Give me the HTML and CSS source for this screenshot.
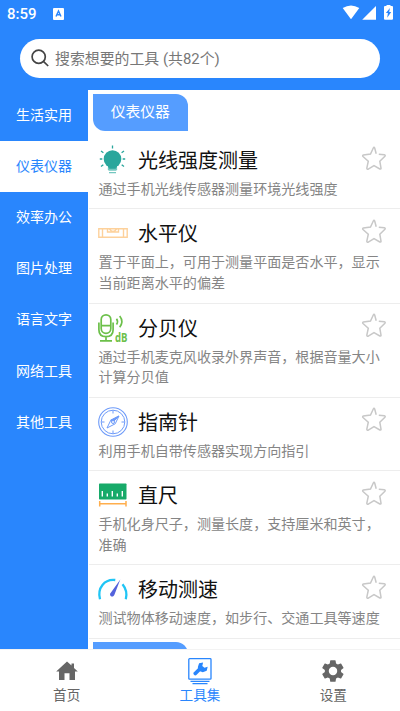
FILE: index.html
```html
<!DOCTYPE html>
<html lang="zh-CN">
<head>
<meta charset="utf-8">
<meta name="viewport" content="width=device-width, initial-scale=1">
<title>工具集</title>
<link rel="stylesheet" href="styles.css">
</head>
<body>
<svg class="defs" width="0" height="0"><symbol id="star" viewBox="0 0 26 26"><path d="M15.2 8.8 13.7 3Q13 1.5 12.3 3L9.5 9.1 2.4 10Q1.1 10.5 2 11.5L7.3 16.2 5.8 23.2Q6 24.7 7.3 24.2L13 20.6 18.8 24Q20.2 24.4 20 23L18.8 16.2 23.9 11.3Q24.7 10.1 23.4 9.8L17.8 9.2"/></symbol></svg>
<header class="header">
  <div class="status">
    <span class="clock">8:59</span>
    <svg class="status-app" width="11" height="12" viewBox="0 0 11 12"><rect width="11" height="12" rx="1" fill="#fff"/><path d="M3 8.5 5.5 3 8 8.5M4 6.7h3" fill="none" stroke="#2986fd" stroke-width="1.4"/></svg>
    <svg class="status-icons" width="51" height="17" viewBox="0 0 51 17" fill="#fff"><path d="M.7 4Q9-1.2 17.3 4L9 15.2zM34 2v13.8H20.2zM42 3q0-1 1-1h1.500V1h4v1H50q1 0 1 1v11.800q0 1-1 1h-7q-1 0-1-1z"/><path d="m47.900 4-4 5h2l-.7 4.700 4-5.600h-2z" fill="#2986fd"/></svg>
  </div>
  <div class="search">
    <svg width="18" height="18" viewBox="0 0 18 18" fill="none" stroke="#444" stroke-width="1.7"><circle cx="7.7" cy="7.7" r="6.6"/><path d="m12.4 12.4 4.8 4.6"/></svg>
    <span>搜索想要的工具 (共82个)</span>
  </div>
</header>
<main class="main">
  <nav class="side">
    <a>生活实用</a><a class="current">仪表仪器</a><a>效率办公</a><a>图片处理</a><a>语言文字</a><a>网络工具</a><a>其他工具</a>
  </nav>
  <div class="content">
    <h2 class="section">仪表仪器</h2>
    <article class="tool">
      <div class="tool-head">
        <svg class="icon" viewBox="0 0 30 30"><circle cx="14.5" cy="14" r="8.8" fill="#29a69c"/><path d="M10 20h9v4h-9z" fill="#29a69c"/><path d="M10.5 22.5v1.8h8v-1.8M10.5 25.2h8M11 27.6h7" fill="none" stroke="#74c7c0" stroke-width="1.3"/><path d="M14.5.5v3M3 6l2.4 1.8M26 6l-2.4 1.8M1.8 14h2.5M24.7 14h2.5M3 21.5l2.3-1.8M26 21.5l-2.3-1.8" stroke="#29a69c" stroke-width="1.3"/></svg>
        <h3>光线强度测量</h3><svg class="star"><use href="#star"/></svg>
      </div>
      <p>通过手机光线传感器测量环境光线强度</p>
    </article>
    <article class="tool">
      <div class="tool-head">
        <svg class="icon" viewBox="0 0 30 30" fill="none" stroke="#fdd19b" stroke-width="1.4"><path d="M.8 10.8h28.4v8.4H.8zM4.5 11v8M25.5 11v8M9.5 11v3h11v-3M11.5 11q3.5 5 7 0"/></svg>
        <h3>水平仪</h3><svg class="star"><use href="#star"/></svg>
      </div>
      <p>置于平面上，可用于测量平面是否水平，显示当前距离水平的偏差</p>
    </article>
    <article class="tool">
      <div class="tool-head">
        <svg class="icon" viewBox="0 0 30 30" fill="none" stroke="#6cc04a" stroke-width="1.7"><rect x="3.2" y="1.8" width="9.6" height="18.5" rx="4.8"/><path d="M3.2 12.7h9.6M.9 9.5v7.2q0 6.9 7.1 6.9t7.1-6.9V9.5M8 24v3.7M2 27.9h12M18.5 5.8q2 2.7 0 5.6M21.7 3q4.3 5.5 0 11.2"/><text class="db" x="17" y="28.6" textLength="12.500" lengthAdjust="spacingAndGlyphs">dB</text></svg>
        <h3>分贝仪</h3><svg class="star"><use href="#star"/></svg>
      </div>
      <p>通过手机麦克风收录外界声音，根据音量大小计算分贝值</p>
    </article>
    <article class="tool">
      <div class="tool-head">
        <svg class="icon" viewBox="0 0 30 30" fill="none" stroke="#6e9bf9"><circle cx="15" cy="15" r="14.3" stroke-width="1.1"/><circle cx="15" cy="15" r="11.8"/><path d="M15 3.5v3M15 23.5v3M3.5 15h3M23.5 15h3M21 9l-8.2 4.2L9 21l8.2-4.2z"/><path d="m21 9-8.2 4.2 2.1 2z" fill="#6e9bf9"/><circle cx="15" cy="15" r="1.5" fill="#fff"/></svg>
        <h3>指南针</h3><svg class="star"><use href="#star"/></svg>
      </div>
      <p>利用手机自带传感器实现方向指引</p>
    </article>
    <article class="tool">
      <div class="tool-head">
        <svg class="icon" viewBox="0 0 30 30"><rect x="1" y="3.5" width="27.5" height="16" rx=".7" fill="#17aa69"/><path d="M4.3 11v5.5M9.3 13.5v3M14.3 11v5.5M19.3 13.5v3M24.3 11v5.5" stroke="#fff" stroke-width="1.4"/><path d="M1.7 21v5.5M28 21v5.5M1.7 23.8H28" stroke="#ffae4d" stroke-width="1.5"/></svg>
        <h3>直尺</h3><svg class="star"><use href="#star"/></svg>
      </div>
      <p>手机化身尺子，测量长度，支持厘米和英寸，准确</p>
    </article>
    <article class="tool">
      <div class="tool-head">
        <svg class="icon" viewBox="0 0 30 30" fill="none" stroke="#20c5f5" stroke-width="2.3"><path d="M2 25.3C-1 14 6.5 4.7 17.3 6M24.5 10.300q5.500 6.700 3.300 15"/><path d="m22.300 5.600-9.500 13.100a2.200 2.200 0 1 0 3.500 2.400z" fill="#5362dc" stroke="none"/></svg>
        <h3>移动测速</h3><svg class="star"><use href="#star"/></svg>
      </div>
      <p>测试物体移动速度，如步行、交通工具等速度</p>
    </article>
    <div class="section"></div>
  </div>
</main>
<footer class="tabs">
  <a><svg width="26" height="26" viewBox="0 0 26 26" fill="#666"><path d="M13 3.500 2.200 13.500H5V22h5.500v-6.800h5V22H21v-8.500h2.800L20 9.900V5.500h-2.500v2.100z"/></svg><span>首页</span></a>
  <a class="current"><svg width="26" height="27" viewBox="0 0 26 27" fill="none" stroke="#2986fd" stroke-width="1.3"><rect x="1.800" y=".7" width="22.200" height="20.500" rx=".8"/><path d="M3.500 23.400h19M5.500 25.700h15"/><path d="m8.300 15.500 5-5" stroke-width="3.8" stroke-linecap="round"/><path d="m10.800 9.300 1.300-4 4-.8-.8 3.500 2.200 1.800 3.200-1-1 4-3.900 1.500-3.500-1.300z" fill="#2986fd" stroke="none"/></svg><span>工具集</span></a>
  <a><svg width="26" height="26" viewBox="0 0 24 24" fill="#666"><path d="M19.4 13a7.6 7.6 0 0 0 0-2l2.1-1.6a.5.5 0 0 0 .1-.7l-2-3.4a.5.5 0 0 0-.6-.2l-2.5 1a7.3 7.3 0 0 0-1.7-1l-.4-2.6a.5.5 0 0 0-.5-.5h-4a.5.5 0 0 0-.5.5L9 5.1a7.3 7.3 0 0 0-1.7 1l-2.5-1a.5.5 0 0 0-.6.2l-2 3.4a.5.5 0 0 0 .1.7L4.5 11a7.6 7.6 0 0 0 0 2l-2.2 1.6a.5.5 0 0 0-.1.7l2 3.4a.5.5 0 0 0 .6.2l2.5-1a7.3 7.3 0 0 0 1.7 1l.4 2.6a.5.5 0 0 0 .5.5h4a.5.5 0 0 0 .5-.5l.4-2.6a7.3 7.3 0 0 0 1.7-1l2.5 1a.5.5 0 0 0 .6-.2l2-3.4a.5.5 0 0 0-.1-.7z"/><circle cx="12" cy="12" r="3.9" fill="#fff"/></svg><span>设置</span></a>
</footer>
</body>
</html>
```
FILE: styles.css
```css
* { box-sizing: border-box; }
body {
  margin: 0;
  height: 711px;
  display: flex;
  flex-direction: column;
  overflow: hidden;
  background: #fff;
  font-family: Roboto, "Noto Sans CJK SC", sans-serif;
}
h2, h3, p { margin: 0; font-weight: 400; }
svg { display: block; flex: none; }
.defs { position: absolute; }
.header { height: 90px; flex: none; background: #2986fd; }
.status { height: 39px; display: flex; align-items: flex-start; padding: 0 7px; color: #fff; }
.clock { width: 46px; font-size: 15px; font-weight: 500; line-height: 29px; }
.status-app { margin-top: 8px; }
.status-icons { margin: 4px 0 0 auto; }
.search {
  height: 39px;
  margin: 0 20px;
  padding: 0 0 1px 11px;
  display: flex;
  align-items: center;
  gap: 6px;
  border-radius: 20px;
  background: #fff;
  color: #777;
  font-size: 14.9px;
}
.search span { padding-bottom: 2px; }
.main { flex: 1; min-height: 0; display: flex; background: #2986fd; }
.side { width: 88px; flex: none; }
.side a {
  display: flex;
  height: 51.1px;
  padding-bottom: 3px;
  align-items: center;
  justify-content: center;
  color: #fff;
  font-size: 14px;
}
.side .current { background: #fff; color: #2986fd; }
.content { flex: 1; min-width: 0; overflow: hidden; background: #fff; padding: 4px 0 0 1px; }
.section {
  width: 94.5px;
  height: 36.5px;
  margin: 0 0 5.5px 4px;
  border-radius: 0 12px 0 12px;
  background: #559dff;
  color: #fff;
  font-size: 14.8px;
  line-height: 36px;
  text-align: center;
}
.tool { padding: 8px 10px 8.5px 9.5px; border-bottom: 1px solid #ededed; }
.tool + .section { margin-top: 3.5px; }
.tool-head { height: 34px; display: flex; align-items: center; }
.icon { width: 30px; height: 30px; margin: 0 0 2px -0.5px; overflow: visible; }
.tool h3 { flex: 1; margin-left: 10px; font-size: 20px; line-height: 32px; color: #111; }
.star { width: 26px; height: 26px; margin: 0 3px 7px 0; fill: none; stroke: #c8c8c8; stroke-width: 1.5; }
.tool p { margin-top: 1px; font-size: 14.07px; line-height: 20.85px; color: #858585; }
.db { font: 700 12px "Open Sans", sans-serif; fill: #6cc04a; stroke: none; }
.tabs { height: 62px; flex: none; display: flex; border-top: 1px solid #f3f3f3; background: #fff; }
.tabs a {
  flex: 1;
  display: flex;
  flex-direction: column;
  align-items: center;
  padding-top: 8px;
  color: #666;
  font-size: 13.6px;
}
.tabs span { margin-top: auto; padding-bottom: 6px; line-height: 20px; }
.tabs .current { color: #2986fd; }
```
